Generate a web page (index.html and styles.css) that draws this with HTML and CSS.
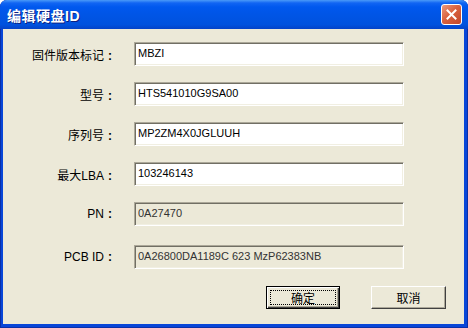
FILE: index.html
```html
<!DOCTYPE html>
<html lang="zh-CN">
<head>
    <meta charset="UTF-8">
    <title>编辑硬盘ID</title>
    <link rel="stylesheet" href="styles.css">
</head>
<body>

    <div class="window">
        <!-- Title bar -->
        <div class="titlebar">
            <span class="title">编辑硬盘ID</span>
            <span class="close">
                <svg width="11" height="11" viewBox="0 0 11 11">
                    <path d="M1.5 1.5 L9.5 9.5 M9.5 1.5 L1.5 9.5" stroke="#fff" stroke-width="2" stroke-linecap="square"/>
                </svg>
            </span>
        </div>

        <div class="client">
            <div class="form">
                <div class="row"><span class="label">固件版本标记<span class="colon">:</span></span><input class="field" value="MBZI"></div>
                <div class="row"><span class="label">型号<span class="colon">:</span></span><input class="field" value="HTS541010G9SA00"></div>
                <div class="row"><span class="label">序列号<span class="colon">:</span></span><input class="field" value="MP2ZM4X0JGLUUH"></div>
                <div class="row"><span class="label">最大LBA<span class="colon">:</span></span><input class="field" value="103246143"></div>
                <div class="row"><span class="label">PN<span class="colon">:</span></span><input class="field" readonly value="0A27470"></div>
                <div class="row pcb"><span class="label">PCB ID<span class="colon">:</span></span><input class="field" readonly value="0A26800DA1189C 623 MzP62383NB"></div>
            </div>

            <div class="buttons">
                <button class="btn default"><span class="focus">确定</span></button>
                <button class="btn">取消</button>
            </div>
        </div>
    </div>

</body>
</html>
```

FILE: styles.css
```css
body {
    margin: 0;
    background: #ffffff;
    font-family: "Liberation Sans", "Noto Sans CJK SC", sans-serif;
}

.window {
    width: 468px;
    height: 328px;
    display: flex;
    flex-direction: column;
    background: #0846d8;
    border-radius: 7px 7px 0 0;
    box-shadow: inset 1px 0 #0a2fa8, inset -1px 0 #0a2fa8, inset 0 -1px #0a2fa8;
    overflow: hidden;
}

.titlebar {
    height: 29px;
    flex: none;
    display: flex;
    align-items: center;
    justify-content: space-between;
    padding: 0 6px 0 7px;
    background: linear-gradient(#4a9af8 0, #1165f3 3px, #0058ee 7px, #0055e6 50%, #0052de 85%, #0443c8 100%);
}

.title {
    color: #ffffff;
    font-size: 14px;
    font-weight: bold;
    text-shadow: 1px 1px #0c1f80;
    letter-spacing: 0.5px;
}

.close {
    width: 19px;
    height: 19px;
    display: flex;
    align-items: center;
    justify-content: center;
    border: 1px solid #ffffff;
    border-radius: 3px;
    background: linear-gradient(135deg, #ec9a7e 0, #d9623f 45%, #c2462a 100%);
}

.client {
    flex: 1;
    margin: 0 4px 4px 3px;
    background: #ece9d8;
    display: flex;
    flex-direction: column;
    padding-top: 13px;
}

.form {
    display: flex;
    flex-direction: column;
    gap: 16px;
}

.row {
    display: flex;
    align-items: center;
    gap: 18px;
}

.row.pcb {
    margin-top: 3px;
}

.label {
    width: 113px;
    text-align: right;
    font-size: 12px;
    color: #000000;
}

/* full-width colon, centred in its cell */
.colon {
    display: inline-block;
    width: 12px;
    text-align: center;
    font-weight: bold;
}

.field {
    width: 270px;
    height: 24px;
    box-sizing: border-box;
    margin: 0;
    padding: 0 3px 2px;
    border: 1px solid;
    border-color: #aca899 #ffffff #ffffff #aca899;
    box-shadow: inset 1px 1px #716f64, inset -1px -1px #f1efe2;
    background: #ffffff;
    font-family: "Liberation Sans", sans-serif;
    font-size: 11px;
    color: #000000;
    outline: none;
}

.field[readonly] {
    background: #ece9d8;
    color: #333333;
}

/* Dialog buttons */
.buttons {
    display: flex;
    justify-content: flex-end;
    gap: 31px;
    padding-right: 18px;
    margin-top: 17px;
}

.btn {
    width: 75px;
    height: 23px;
    margin: 0;
    padding: 0;
    background: #ece9d8;
    border: 1px solid;
    border-color: #ffffff #404040 #404040 #ffffff;
    box-shadow: inset -1px -1px #aca899;
    font-family: "Noto Sans CJK SC", sans-serif;
    font-size: 12px;
    color: #000000;
}

.btn.default {
    width: 74px;
    border: 1px solid #000000;
    box-shadow: inset 1px 1px #ffffff, inset -1px -1px #404040, inset -2px -2px #aca899;
    padding: 3px;
}

.focus {
    display: block;
    height: 100%;
    box-sizing: border-box;
    border: 1px dotted #000000;
    line-height: 13px;
}
```
